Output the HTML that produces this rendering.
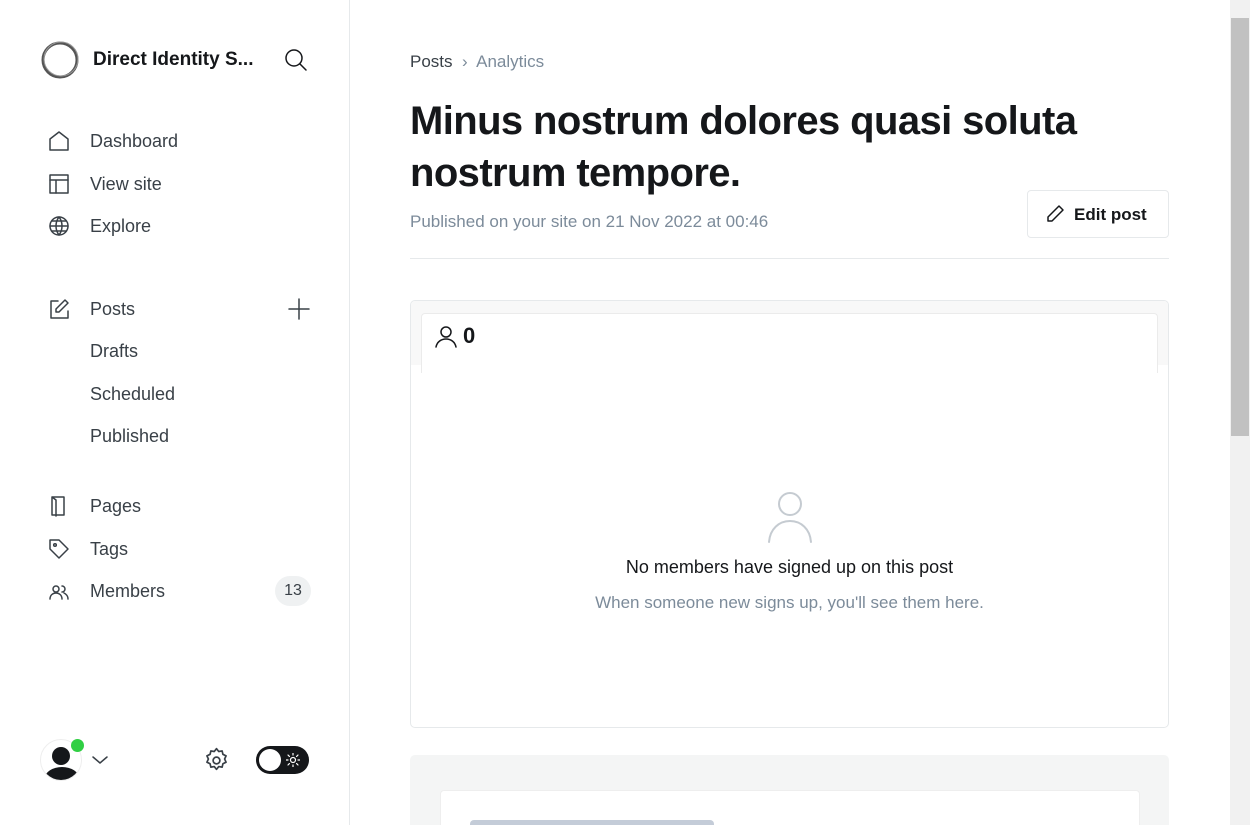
<!DOCTYPE html>
<html style="overflow:hidden;height:825px"><head><style>
*{box-sizing:border-box;margin:0;padding:0}
body{width:1250px;height:825px;overflow:hidden;font-family:"Liberation Sans",sans-serif;background:#fff;position:relative;color:#15171a}
.side{position:absolute;left:0;top:0;width:350px;height:825px;border-right:1px solid #e6e9eb}
.nav{position:absolute;left:90px;font-size:18px;color:#394047;margin-top:1px}
.ic{position:absolute;left:48px}
svg{fill:none;stroke:#394047;stroke-width:1.5;stroke-linecap:round;stroke-linejoin:round}
.main{position:absolute;left:410px;width:759px}
.sb{position:absolute;left:1230px;top:0;width:20px;height:825px;background:#f1f1f1}
</style></head><body>
<div class="side">
<svg style="position:absolute;left:40px;top:40px" width="40" height="40" viewBox="0 0 40 40"><circle cx="20" cy="20" r="17" stroke="#555" stroke-width="3"/><circle cx="21" cy="19" r="17" stroke="#999" stroke-width="1"/></svg>
<div style="position:absolute;left:93px;top:49px;font-size:19px;font-weight:bold">Direct Identity S...</div>
<svg style="position:absolute;left:284px;top:48px" width="24" height="24" viewBox="0 0 24 24"><circle cx="10" cy="10" r="8" stroke="#15171a"/><path d="M16 16l6 6" stroke="#15171a"/></svg>
<svg class="ic" style="top:130px" width="22" height="22" viewBox="0 0 22 22"><path d="M2 9L11 2l9 7v11H2z"/></svg>
<div class="nav" style="top:130px">Dashboard</div>
<svg class="ic" style="top:173px" width="22" height="22" viewBox="0 0 22 22"><rect x="2" y="2" width="18" height="18"/><path d="M2 7h18M8 7v13"/></svg>
<div class="nav" style="top:173px">View site</div>
<svg class="ic" style="top:215px" width="22" height="22" viewBox="0 0 22 22"><circle cx="11" cy="11" r="9"/><path d="M2 11h18M11 2c-4 5-4 13 0 18M11 2c4 5 4 13 0 18M4 6h14M4 16h14"/></svg>
<div class="nav" style="top:215px">Explore</div>
<svg class="ic" style="top:298px" width="22" height="22" viewBox="0 0 22 22"><path d="M10 3H3v17h17v-7M17 2l3 3-9 9H8v-3z"/></svg>
<div class="nav" style="top:298px">Posts</div>
<svg style="position:absolute;left:288px;top:298px" width="22" height="22" viewBox="0 0 22 22"><path d="M11 1v20M1 11h20"/></svg>
<div class="nav" style="top:340px">Drafts</div>
<div class="nav" style="top:383px">Scheduled</div>
<div class="nav" style="top:425px">Published</div>
<svg class="ic" style="top:495px" width="22" height="22" viewBox="0 0 22 22"><path d="M4 2h12v18H4zM4 2l4 3v16"/></svg>
<div class="nav" style="top:495px">Pages</div>
<svg class="ic" style="top:538px" width="22" height="22" viewBox="0 0 22 22"><path d="M2 2h9l9 9-9 9-9-9z"/><circle cx="7" cy="7" r="1.3"/></svg>
<div class="nav" style="top:538px">Tags</div>
<svg class="ic" style="top:581px" width="22" height="22" viewBox="0 0 22 22"><circle cx="8" cy="8" r="3"/><path d="M2 18c0-4 3-6 6-6s6 2 6 6M14 5a3 3 0 010 6M16 12c2 1 4 3 4 6"/></svg>
<div class="nav" style="top:580px">Members</div>
<div style="position:absolute;left:275px;top:576px;width:36px;height:30px;border-radius:15px;background:#eff1f2;font-size:16px;color:#394047;text-align:center;line-height:30px">13</div>
<div style="position:absolute;left:40px;top:739px;width:42px;height:42px;border-radius:50%;border:1px solid #eee;overflow:hidden;background:#fff"><div style="position:absolute;left:11px;top:7px;width:18px;height:18px;border-radius:50%;background:#15171a"></div><div style="position:absolute;left:4px;top:27px;width:34px;height:22px;border-radius:50%;background:#15171a"></div></div>
<div style="position:absolute;left:71px;top:739px;width:13px;height:13px;border-radius:50%;background:#30cf43"></div>
<svg style="position:absolute;left:92px;top:755px" width="16" height="10" viewBox="0 0 16 10"><path d="M1 2l7 6 7-6"/></svg>
<svg style="position:absolute;left:203px;top:747px" width="27" height="27" viewBox="0 0 24 24"><circle cx="12" cy="12" r="3"/><path d="M12 1.5l2 2.5 3-.5.7 3 2.8 1.4-1.3 2.8 1.3 2.8-2.8 1.4-.7 3-3-.5-2 2.5-2-2.5-3 .5-.7-3-2.8-1.4 1.3-2.8-1.3-2.8 2.8-1.4.7-3 3 .5z"/></svg>
<div style="position:absolute;left:256px;top:746px;width:53px;height:28px;border-radius:14px;background:#15171a"><div style="position:absolute;left:3px;top:3px;width:22px;height:22px;border-radius:50%;background:#fff"></div><svg style="position:absolute;left:30px;top:7px" width="14" height="14" viewBox="0 0 14 14"><circle cx="7" cy="7" r="2.5" stroke="#fff" stroke-width="1.2"/><path d="M7 0v2M7 12v2M0 7h2M12 7h2M2 2l1.4 1.4M10.6 10.6L12 12M2 12l1.4-1.4M10.6 3.4L12 2" stroke="#fff" stroke-width="1.2"/></svg></div>
</div>
<div class="main" style="top:52px;font-size:17px;color:#394047">Posts <span style="color:#7c8b9a">&nbsp;›&nbsp; Analytics</span></div>
<div class="main" style="top:95px;font-size:40px;font-weight:bold;line-height:52px;letter-spacing:-0.6px">Minus nostrum dolores quasi soluta nostrum tempore.</div>
<div class="main" style="top:212px;font-size:17px;color:#7c8b9a">Published on your site on 21 Nov 2022 at 00:46</div>
<div style="position:absolute;left:1027px;top:190px;width:142px;height:48px;border:1px solid #e6e9eb;border-radius:4px;font-size:17px;font-weight:bold;line-height:48px;padding-left:46px">Edit post</div>
<svg style="position:absolute;left:1045px;top:204px" width="20" height="20" viewBox="0 0 20 20"><path d="M14 2l4 4L7 17H3v-4z" stroke="#15171a"/></svg>
<div class="main" style="top:258px;border-top:1px solid #e6e9eb"></div>
<div style="position:absolute;left:410px;top:300px;width:759px;height:428px;border:1px solid #e6e9eb;border-radius:5px;background:#fff;overflow:hidden">
<div style="height:64px;background:#f8f8f8"></div>
<div style="position:absolute;left:10px;top:12px;width:737px;height:60px;background:#fff;border:1px solid #ebebeb;border-bottom:0;border-radius:4px 4px 0 0"></div>
<svg style="position:absolute;left:23px;top:24px" width="24" height="24" viewBox="0 0 24 24"><circle cx="12" cy="7" r="5" stroke="#15171a"/><path d="M2 22c1-5 5-8 10-8s9 3 10 8" stroke="#15171a"/></svg>
<div style="position:absolute;left:52px;top:22px;font-size:22px;font-weight:bold">0</div>
<svg style="position:absolute;left:356px;top:190px" width="46" height="52" viewBox="0 0 46 52"><circle cx="23" cy="13" r="11" stroke="#c5cbd1" stroke-width="2"/><path d="M2 51c1-13 10-21 21-21s20 8 21 21" stroke="#c5cbd1" stroke-width="2"/></svg>
<div style="position:absolute;left:0;width:757px;top:256px;text-align:center;font-size:18px">No members have signed up on this post</div>
<div style="position:absolute;left:0;width:757px;top:292px;text-align:center;font-size:17px;color:#7c8b9a">When someone new signs up, you'll see them here.</div>
</div>
<div style="position:absolute;left:410px;top:755px;width:759px;height:70px;background:#f4f5f5;border-radius:5px 5px 0 0;overflow:hidden">
<div style="position:absolute;left:30px;top:35px;width:700px;height:60px;background:#fff;border-radius:4px;border:1px solid #eee"></div>
<div style="position:absolute;left:60px;top:65px;width:244px;height:10px;background:#c4ccd8;border-radius:4px"></div>
</div>
<div class="sb"><div style="position:absolute;left:1px;top:18px;width:18px;height:418px;background:#c1c1c1"></div></div>
</body></html>
